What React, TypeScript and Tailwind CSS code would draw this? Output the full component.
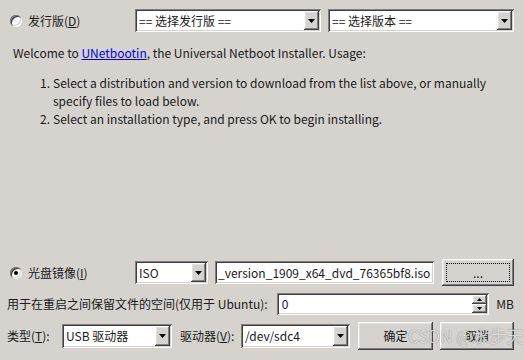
import type { ReactNode } from 'react'

const sunken =
  'shadow-[inset_1px_1px_#808080,inset_-1px_-1px_#ffffff,inset_2px_2px_#404040,inset_-2px_-2px_#d6d3ce]'
const raised =
  'shadow-[inset_-1px_-1px_#404040,inset_1px_1px_#ffffff,inset_-2px_-2px_#808080,inset_2px_2px_#e4e1dc]'

function Radio({ checked }: { checked?: boolean }) {
  return (
    <span
      className={`w-[12px] h-[12px] rounded-full bg-white flex items-center justify-center shrink-0 ${sunken}`}
    >
      {checked && <span className="w-[4px] h-[4px] rounded-full bg-black" />}
    </span>
  )
}

function DownArrow() {
  return (
    <svg width="7" height="4" viewBox="0 0 7 4">
      <polygon points="0,0 7,0 3.5,4" fill="#000" />
    </svg>
  )
}

function Combo({ width, height = 'h-[23px]', children }: { width: string; height?: string; children: ReactNode }) {
  return (
    <div className={`${width} ${height} bg-white p-[2px] flex shrink-0 ${sunken}`}>
      <span className="flex-1 pl-[2px] flex items-center whitespace-nowrap overflow-hidden">{children}</span>
      <span className={`w-[15px] h-full bg-[#d6d3ce] flex items-center justify-center ${raised}`}>
        <DownArrow />
      </span>
    </div>
  )
}

function PushButton({ width, focused, children }: { width: string; focused?: boolean; children: ReactNode }) {
  return (
    <div className={`${width} h-full bg-[#d6d3ce] p-[4px] flex shrink-0 ${raised}`}>
      <div
        className={`flex-1 flex items-center justify-center border ${
          focused ? 'border-dotted border-black' : 'border-transparent'
        }`}
      >
        {children}
      </div>
    </div>
  )
}

export default function App() {
  return (
    <div className="relative w-[524px] h-[360px] bg-[#d6d3ce] overflow-hidden flex flex-col pl-[7px] pr-[10px] text-[12px] text-[#1a1a1a] [font-family:'Noto_Sans_CJK_SC',sans-serif] leading-none">
      {/* distribution row */}
      <div className="flex items-center mt-[9px] h-[23px]">
        <div className="w-[128px] flex items-center gap-[6px] pl-[3px]">
          <Radio />
          <span>
            发行版(<span className="underline">D</span>)
          </span>
        </div>
        <Combo width="w-[186px]">== 选择发行版 ==</Combo>
        <div className="ml-[7px]">
          <Combo width="w-[186px]">== 选择版本 ==</Combo>
        </div>
      </div>

      {/* usage text */}
      <div className="mt-[12px] pl-[6px] text-[12px] leading-[18px]">
        <p>
          Welcome to <span className="text-[#0000ee] underline">UNetbootin</span>, the Universal Netboot
          Installer. Usage:
        </p>
        <ol className="mt-[12px] pl-[27px]">
          <li className="grid grid-cols-[13px_1fr]">
            <span>1.</span>
            <span className="whitespace-nowrap">
              Select a distribution and version to download from the list above, or manually
              <br />
              specify files to load below.
            </span>
          </li>
          <li className="grid grid-cols-[13px_1fr]">
            <span>2.</span>
            <span>Select an installation type, and press OK to begin installing.</span>
          </li>
        </ol>
      </div>

      <div className="flex-1" />

      {/* disk image row */}
      <div className="flex items-center h-[27px]">
        <div className="w-[128px] flex items-center gap-[6px] pl-[3px]">
          <Radio checked />
          <span>
            光盘镜像(<span className="underline">I</span>)
          </span>
        </div>
        <Combo width="w-[73px]">ISO</Combo>
        <div
          className={`ml-[7px] w-[219px] h-[23px] bg-white px-[3px] flex items-center overflow-hidden whitespace-nowrap ${sunken}`}
        >
          _version_1909_x64_dvd_76365bf8.iso
        </div>
        <div className="ml-[8px] h-full">
          <PushButton width="w-[72px]" focused>
            ...
          </PushButton>
        </div>
      </div>

      {/* persistence row */}
      <div className="mt-[7px] h-[22px] flex items-center">
        <span className="w-[270px] whitespace-nowrap">用于在重启之间保留文件的空间(仅用于 Ubuntu):</span>
        <div className={`w-[213px] h-full bg-white p-[2px] flex ${sunken}`}>
          <span className="flex-1 pl-[3px] flex items-center">0</span>
          <span className="w-[15px] flex flex-col">
            <span className={`flex-1 bg-[#d6d3ce] flex items-center justify-center ${raised}`}>
              <svg width="5" height="3" viewBox="0 0 5 3">
                <polygon points="0,3 5,3 2.5,0" fill="#000" />
              </svg>
            </span>
            <span className={`flex-1 bg-[#d6d3ce] flex items-center justify-center ${raised}`}>
              <svg width="5" height="3" viewBox="0 0 5 3">
                <polygon points="0,0 5,0 2.5,3" fill="#000" />
              </svg>
            </span>
          </span>
        </div>
        <span className="ml-[7px]">MB</span>
      </div>

      {/* type / drive row */}
      <div className="mt-[7px] mb-[10px] h-[28px] flex items-center">
        <span className="w-[55px] whitespace-nowrap">
          类型(<span className="underline">T</span>):
        </span>
        <Combo width="w-[110px]" height="h-[24px]">
          USB 驱动器
        </Combo>
        <span className="ml-[8px] w-[61px] whitespace-nowrap">
          驱动器(<span className="underline">V</span>):
        </span>
        <Combo width="w-[109px]" height="h-[24px]">
          /dev/sdc4
        </Combo>
        <div className="ml-[8px] h-full">
          <PushButton width="w-[75px]">确定</PushButton>
        </div>
        <div className="ml-[7px] h-full">
          <PushButton width="w-[74px]">取消</PushButton>
        </div>
      </div>

      {/* watermark */}
      <div className="absolute left-[408px] top-[327px] text-[17px] text-white/75 [text-shadow:0_0_1px_rgba(0,0,0,0.55)] pointer-events-none whitespace-nowrap">
        CSDN @水步天
      </div>
    </div>
  )
}
